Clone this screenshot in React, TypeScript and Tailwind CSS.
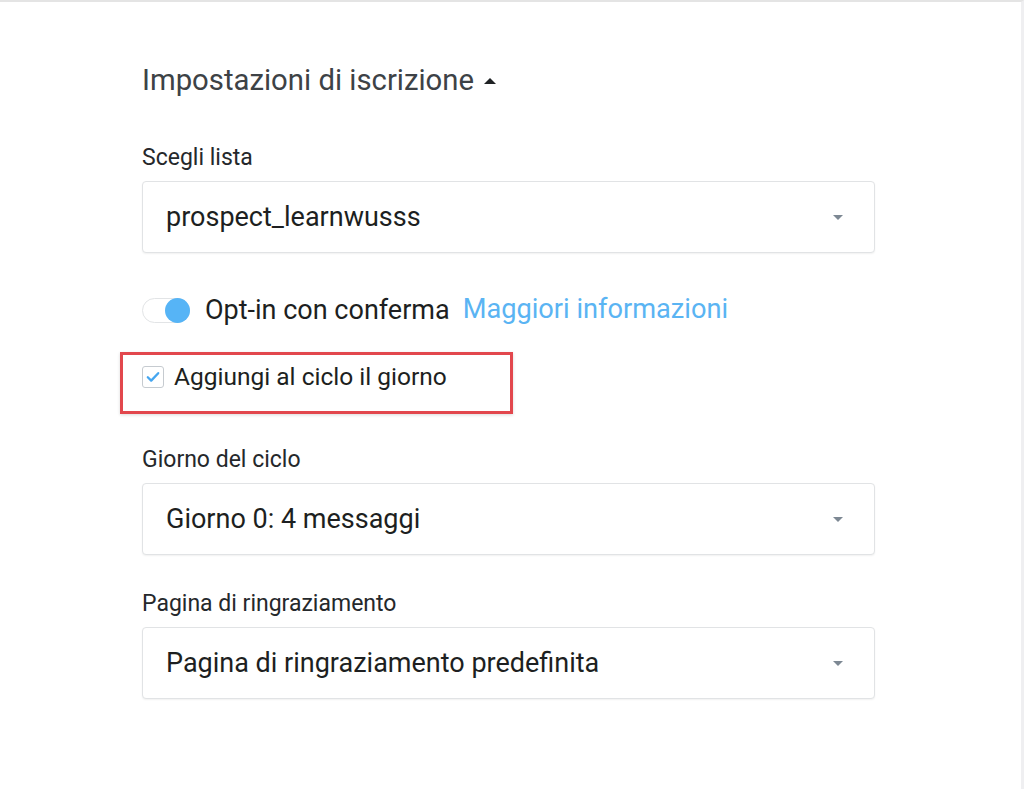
import { useState } from 'react'

type Option = { label: string; value: string }

const Caret = () => (
  <span className="h-0 w-0 border-x-[5px] border-t-[5px] border-x-transparent border-t-[#7d8893]" />
)

const SelectBox = ({ value }: { value: string }) => (
  <div className="flex h-[72px] w-full items-center justify-between rounded-[4px] border border-[#e1e3e5] bg-white pl-[23px] pr-[31px] shadow-[0_1px_2px_rgba(0,0,0,0.06)]">
    <span className="text-[27px] leading-none text-[#1d1f21]">{value}</span>
    <Caret />
  </div>
)

const Field = ({ label, children, className }: { label: string; children: React.ReactNode; className?: string }) => (
  <div className={className}>
    <label className="mb-[9px] block h-[28px] text-[23px] leading-[28px] text-[#25282b]">
      {label}
    </label>
    {children}
  </div>
)

const App = () => {
  const [optIn, setOptIn] = useState(true)
  const [addToCycle, setAddToCycle] = useState(true)

  const lists: Option[] = [{ label: 'prospect_learnwusss', value: 'prospect_learnwusss' }]

  return (
    <div className="min-h-[789px] w-full border-t-2 border-r-[3px] border-t-[#e4e4e4] border-r-[#efeff1] bg-white font-['Roboto',sans-serif]">
      <div className="w-[875px] pl-[142px] pt-[62px]">
        <div className="mb-[48px] flex h-8 items-center gap-[10px]">
          <h2 className="text-[29.3px] leading-8 text-[#3d4246]">Impostazioni di iscrizione</h2>
          <span className="mt-[2px] h-0 w-0 border-x-[6px] border-b-[6px] border-x-transparent border-b-[#1f2224]" />
        </div>

        <Field label="Scegli lista">
          <SelectBox value={lists[0].label} />
        </Field>

        <div className="mt-[37px] flex h-10 items-center">
          <button
            type="button"
            onClick={() => setOptIn(!optIn)}
            className="relative h-[25px] w-[48px] rounded-full border border-[#e2e4e6] bg-white"
          >
            <span
              className={
                optIn
                  ? 'absolute -right-px -top-px h-[25px] w-[25px] rounded-full bg-[#56b4f6]'
                  : 'absolute -left-px -top-px h-[25px] w-[25px] rounded-full bg-[#d5d8db]'
              }
            />
          </button>
          <span className="ml-[15px] text-[27px] leading-none text-[#1d1f21]">Opt-in con conferma</span>
          <a href="#" className="ml-[13px] text-[27.2px] leading-none text-[#5ab4f3]">
            Maggiori informazioni
          </a>
        </div>

        <div className="relative mt-[27px] flex h-10 items-center">
          <div className="pointer-events-none absolute -left-[22px] -top-[5px] h-[62px] w-[393px] border-[3px] border-[#e2474d] shadow-[0_1px_3px_rgba(0,0,0,0.15)]" />
          <button
            type="button"
            onClick={() => setAddToCycle(!addToCycle)}
            className="flex h-[22px] w-[22px] items-center justify-center rounded-[3px] border border-[#c6cbd0] bg-white"
          >
            {addToCycle && (
              <svg width="14" height="12" viewBox="0 0 14 12" fill="none">
                <path d="M1.8 6.2 L5.2 9.6 L12.2 2.2" stroke="#45a6f0" strokeWidth="2.3" strokeLinecap="round" strokeLinejoin="round" />
              </svg>
            )}
          </button>
          <span className="ml-[10px] text-[24.5px] leading-none text-[#1d1f21]">Aggiungi al ciclo il giorno</span>
        </div>

        <Field label="Giorno del ciclo" className="mt-[49px]">
          <SelectBox value="Giorno 0: 4 messaggi" />
        </Field>

        <Field label="Pagina di ringraziamento" className="mt-[35px]">
          <SelectBox value="Pagina di ringraziamento predefinita" />
        </Field>
      </div>
    </div>
  )
}

export default App
